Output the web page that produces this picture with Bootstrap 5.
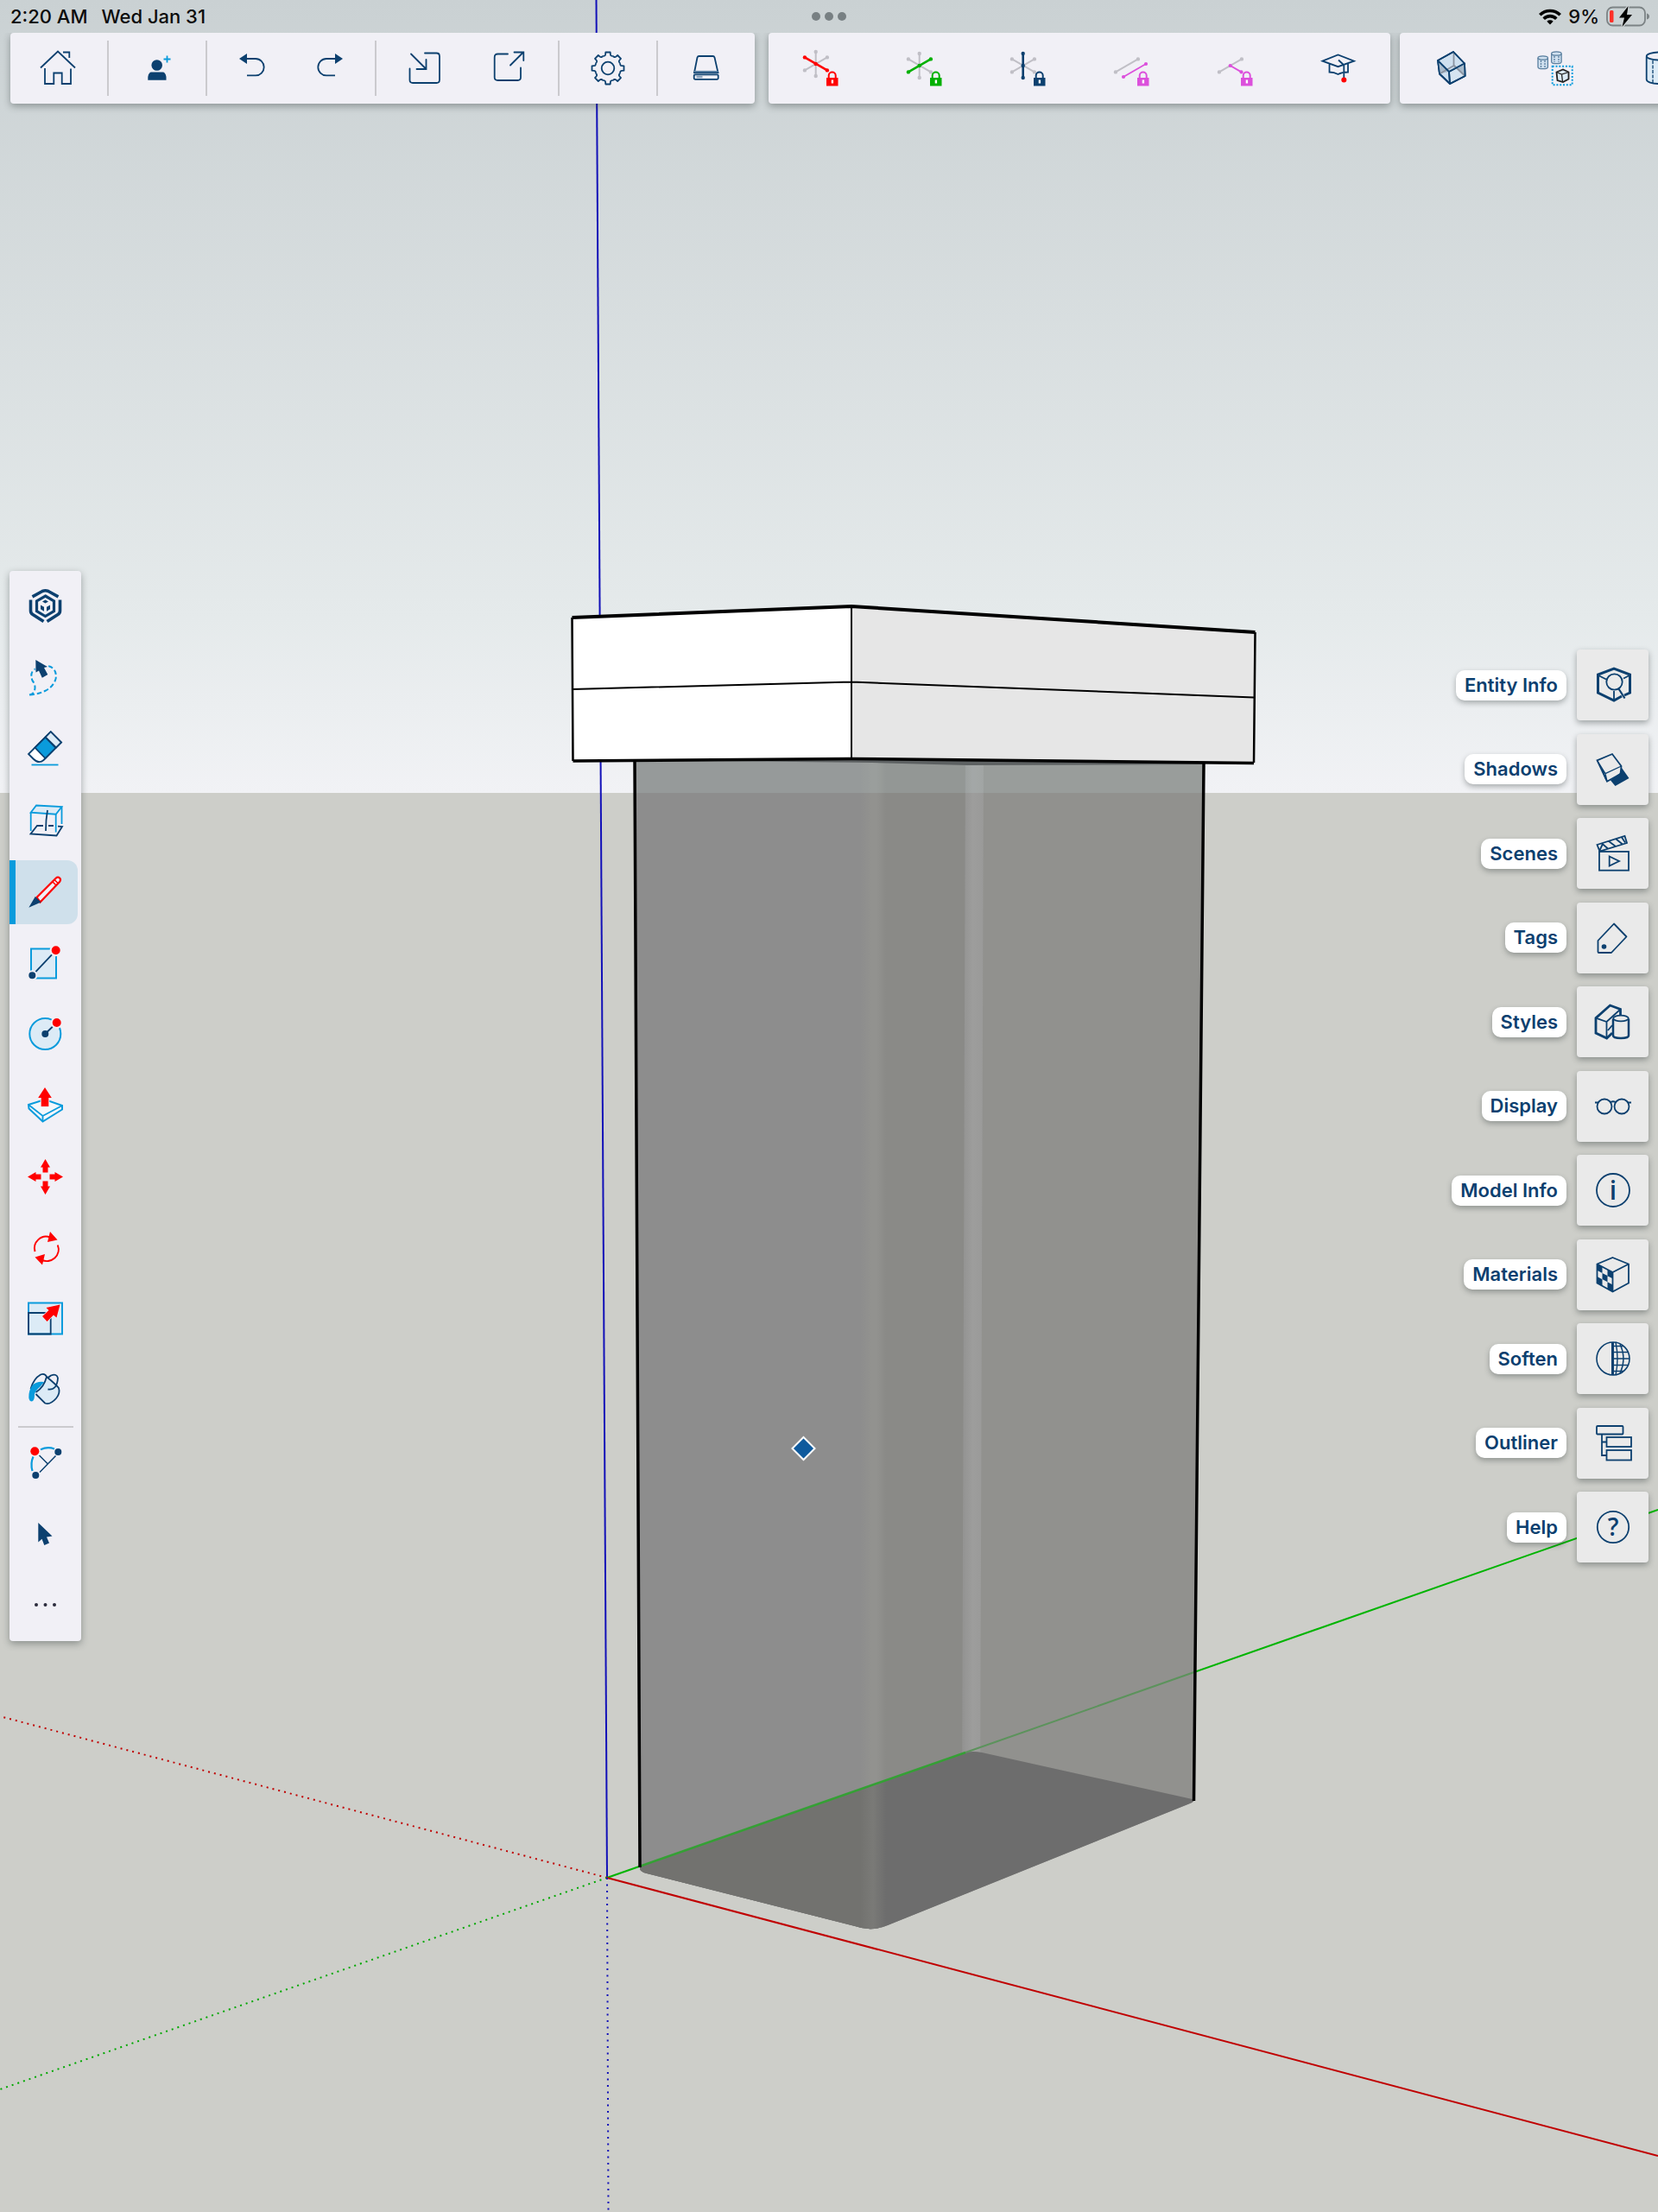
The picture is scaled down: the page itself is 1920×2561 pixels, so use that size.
<!DOCTYPE html>
<html lang="en">
<head>
<meta charset="utf-8">
<meta name="viewport" content="width=device-width, initial-scale=1">
<title>3D modeler</title>
<link href="https://cdn.jsdelivr.net/npm/bootstrap@5.3.0/dist/css/bootstrap.min.css" rel="stylesheet">
<style>
:root{--navy:#0c406f;--sky:#0a9bdc;--pale:#dcebf6;--bar:#f1f0f6;--mag:#dc50dc}
body{font-family:Inter,"Liberation Sans",sans-serif;background:#cdcec9;overflow-x:hidden}
.scene-svg{inset:0;z-index:0}
.top-zone{z-index:2}
.status-row{height:38px;padding:0 10px 0 12px;font-size:22px;line-height:38px;font-weight:500;color:#0b0b0b}
.dots{gap:5px}
.dot3{width:10px;height:10px;background:#788083}
.toolrow{overflow:hidden;padding:0 0 16px 12px}
.panel{background:var(--bar);border-radius:4px;box-shadow:0 3px 8px rgba(40,50,50,.4)}
.toolrow .panel{height:82px}
.file-bar{margin-right:16px}
.axis-bar{margin-right:11px}
.pair{padding:0 7px}
.vsep{width:2px;height:64px;background:#cbcace}
.tool{border:0;background:none;padding:0;display:flex;align-items:center;justify-content:center;flex-shrink:0;color:var(--navy)}
.w112{width:112px}.w90{width:90px}.w98{width:98px}.w120{width:120px}
.ico{width:42px;height:42px;overflow:visible;fill:none;stroke:var(--navy);stroke-width:1.8;display:block}
.rails{padding:0 11px;z-index:1}
.rail-left{width:83px;min-height:1239px}
.rail-left .tool{flex:1 1 0}
.rail-left .cur .hl{height:74px;width:100%;background:#cfe0eb;border-left:7px solid var(--sky);border-radius:0 12px 12px 0;display:flex;align-items:center;padding-left:13px;margin-right:4px}
.hsep{height:2px;width:64px;margin:-1px auto;background:#cbcace}
.rail-right{min-height:1057px}
.tile{width:83px;height:82px;background:#eaeaea;border-radius:4px;box-shadow:0 3px 7px rgba(40,50,50,.4)}
.tag-label{height:35px;line-height:35px;padding:0 10px;border-radius:10px;background:#fff;color:var(--navy);font-size:22px;font-weight:600;box-shadow:0 3px 6px rgba(40,50,50,.35);cursor:pointer}
.lk{stroke:none}
</style>
<script src="https://cdn.jsdelivr.net/npm/bootstrap@5.3.0/dist/js/bootstrap.bundle.min.js"></script>
</head>
<body class="position-relative min-vh-100">

<svg class="scene-svg position-absolute w-100 h-100" viewBox="0 0 1920 2561" preserveAspectRatio="none" aria-hidden="true">
  <defs>
    <linearGradient id="skyg" x1="0" y1="0" x2="0" y2="1"><stop offset="0" stop-color="#cad1d3"/><stop offset=".78" stop-color="#e5eaeb"/><stop offset="1" stop-color="#f1f2f5"/></linearGradient>
    <linearGradient id="st1"><stop offset="0" stop-color="#92928f" stop-opacity="0"/><stop offset=".45" stop-color="#92928f"/><stop offset=".65" stop-color="#92928f"/><stop offset="1" stop-color="#92928f" stop-opacity="0"/></linearGradient>
    <linearGradient id="st3"><stop offset="0" stop-color="#7a7a77" stop-opacity="0"/><stop offset=".5" stop-color="#7a7a77"/><stop offset="1" stop-color="#7a7a77" stop-opacity="0"/></linearGradient>
    <linearGradient id="st2"><stop offset="0" stop-color="#929291"/><stop offset=".5" stop-color="#9d9d9c"/><stop offset="1" stop-color="#9a9a99"/></linearGradient>
    <clipPath id="bodyclip"><path d="M735 880L741 2163Q741 2167 749 2169L990 2230Q1009 2237 1028 2229L1378 2088Q1383 2086 1383 2083L1394 880Z"/></clipPath>
  </defs>
  <rect width="1920" height="918" fill="url(#skyg)"/>
  <rect y="918" width="1920" height="1643" fill="#cdcec9"/>
  <g fill="none" stroke-width="2">
    <path d="M690.500 0L703 2174" stroke="#1210b8"/>
    <path d="M703 2174L1920 1748" stroke="#00b400"/>
    <path d="M703 2174L1920 2496" stroke="#c00000"/>
    <path d="M703 2174L-4 1986" stroke="#c00000" stroke-dasharray="2 5"/>
    <path d="M703 2174L0 2419" stroke="#00a800" stroke-dasharray="2 5"/>
    <path d="M703 2174L704.500 2561" stroke="#1210b8" stroke-dasharray="2 5.500"/>
  </g>
  <g clip-path="url(#bodyclip)">
    <rect x="730" y="870" width="280" height="1400" fill="#8d8d8d"/>
    <path d="M1010 870H1129L1125 2270H1010Z" fill="#8a8a87"/>
    <path d="M1129 870H1400V2270H1125Z" fill="#91918e"/>
    <path d="M1118 870H1139L1135 2100H1114Z" fill="url(#st2)"/>
    <rect x="996" y="870" width="30" height="1400" fill="url(#st1)"/>
    <rect x="730" y="870" width="670" height="48" fill="#c9dfe2" opacity=".16"/>
    <path d="M730 2165L1118 2029Q1127 2027 1137 2029L1390 2085V2300H730Z" fill="#6d6d6d"/>
    <path d="M730 2165L1010 2067V2300H730Z" fill="#72726f"/>
    <path d="M996 2072L1026 2061V2270H996Z" fill="url(#st3)"/>
    <path d="M703 2174L1118 2029" stroke="#35a035" stroke-width="2.500"/>
    <path d="M1118 2029L1400 1930" stroke="#5c935c" stroke-width="2"/>
    <path d="M735 880L1010 883L1120 886L1394 885V878H735Z" fill="#5d6162"/>
  </g>
  <path d="M735 881L741 2162M1394 883L1382.500 2085" stroke="#000" stroke-width="3.500"/>
  <path d="M662.500 715L986 702V878L663.500 881Z" fill="#fff"/>
  <path d="M986 702L1453.500 732L1452 883L986 878Z" fill="#e6e6e6"/>
  <g fill="none" stroke="#000" stroke-linejoin="round">
    <path d="M662.500 715L986 702L1453.500 732" stroke-width="4"/>
    <path d="M663.500 881L986 878.500L1452 883.500" stroke-width="3.500"/>
    <path d="M662.500 715L663.500 881M1453.500 732L1452 883" stroke-width="2.500"/>
    <path d="M663 798L986 789.500L1452 807.500M986 702V878" stroke-width="2"/>
  </g>
  <path d="M930.500 1664L943.500 1677L930.500 1690L917.500 1677Z" fill="#0f5a9d" stroke="#fff" stroke-width="2"/>
</svg>

<svg width="0" height="0" class="position-absolute" aria-hidden="true">
  <defs>
    <g id="lock"><path d="M28 32H41.500V41.500H28Z"/><path d="M30.700 33V29.500a4 4 0 0 1 8 0V33" fill="none" stroke="currentColor" stroke-width="2"/><path d="M33.700 34.500h2.400v4h-2.400z" fill="#fff"/></g>
    <g id="ln1" stroke="#c0bfc6" fill="#c0bfc6" stroke-width="2"><path d="M2.900 10.400L28.900 25.400"/><circle cx="2.900" cy="10.400" r="1.200"/><circle cx="28.900" cy="25.400" r="1.200"/></g>
    <g id="ln2" stroke="#c0bfc6" fill="#c0bfc6" stroke-width="2"><path d="M2.900 25.400L28.900 10.400"/><circle cx="2.900" cy="25.400" r="1.200"/><circle cx="28.900" cy="10.400" r="1.200"/></g>
    <g id="ln3" stroke="#c0bfc6" fill="#c0bfc6" stroke-width="2"><path d="M15.700 4V32"/><circle cx="15.700" cy="4" r="1.200"/><circle cx="15.700" cy="32" r="1.200"/></g>
    <path id="tooth" d="M-5.740-13.860L-3.700-14.500Q-3-14.800-2.900-16L-2.700-18.500H2.700L2.900-16Q3-14.800 3.700-14.500L5.740-13.860"/>
    <path id="arw" d="M0-20.500L5.500-11H3V-5H-3V-11H-5.500Z"/>
  </defs>
</svg>

<header class="top-zone position-absolute top-0 start-0 w-100">
  <div class="status-row d-flex justify-content-between align-items-center position-relative">
    <div class="d-flex gap-3"><span>2:20 AM</span><span>Wed Jan 31</span></div>
    <div class="dots position-absolute top-50 start-50 translate-middle d-flex"><i class="dot3 rounded-circle"></i><i class="dot3 rounded-circle"></i><i class="dot3 rounded-circle"></i></div>
    <div class="d-flex align-items-center gap-2">
      <svg width="26" height="19" viewBox="0 0 26 19" fill="none" stroke="#000" stroke-width="3.600"><path d="M1.300 7.300a16.500 16.500 0 0 1 23.400 0M5.700 11.700a10.300 10.300 0 0 1 14.600 0"/><path d="M9.300 14.700a5.400 5.400 0 0 1 7.400 0L13 18.500z" fill="#000" stroke="none"/></svg>
      <span>9%</span>
      <svg width="50" height="24" viewBox="0 0 50 24"><rect x="1" y="1.500" width="44" height="21" rx="6.500" fill="none" stroke="#7c8385" stroke-width="1.800"/><path d="M47 8.500q3 1 3 3.500t-3 3.500z" fill="#7c8385"/><rect x="4" y="5" width="4.500" height="14" rx="1.500" fill="#ff3028"/><path d="M25.500 0L15 13.500h6L18.500 24 30 10h-6z" fill="#000" stroke="#cbd1d3" stroke-width="2.500" paint-order="stroke"/></svg>
    </div>
  </div>

  <div class="toolrow d-flex">
    <nav class="panel file-bar d-flex align-items-center flex-shrink-0" aria-label="File">
      <button class="tool w112" aria-label="Home"><svg class="ico" viewBox="0 0 42 42"><path d="M0 20.500L20 1.500 40 20.500M26 2.500h7.300V9M5 21V39H15.300V26.500H24.700V39H35V21.500"/></svg></button>
      <span class="vsep"></span>
      <button class="tool w112" aria-label="Add person"><svg class="ico" viewBox="0 0 42 42"><circle cx="20.700" cy="17.500" r="6.300" fill="var(--navy)" stroke="none"/><path d="M10.300 34.700V31q1-5.500 4-5.500H27.500q3 0 4 5.500V34.700Z" fill="var(--navy)" stroke="none"/><path d="M32.500 6.500v8M28.500 10.500h8" stroke="var(--sky)"/></svg></button>
      <span class="vsep"></span>
      <span class="pair d-flex">
        <button class="tool w90" aria-label="Undo"><svg class="ico" viewBox="0 0 42 42"><path d="M14 10H25a9.700 9.700 0 0 1 0 19.400H15"/><path d="M6 10L15 4V16Z" fill="var(--navy)" stroke="none"/></svg></button>
        <button class="tool w90" aria-label="Redo"><svg class="ico" viewBox="0 0 42 42"><path d="M28 10H17a9.700 9.700 0 0 0 0 19.400H27"/><path d="M36 10L27 4V16Z" fill="var(--navy)" stroke="none"/></svg></button>
      </span>
      <span class="vsep"></span>
      <span class="pair d-flex">
        <button class="tool w98" aria-label="Import"><svg class="ico" viewBox="0 0 42 42" stroke-linecap="round"><path d="M21 3.500H34.500Q38 3.500 38 7V34.500Q38 38 34.500 38H7Q3.500 38 3.500 34.500V21.500M5 4.500L22.500 22M11.500 22H22.500V11"/></svg></button>
        <button class="tool w98" aria-label="Export"><svg class="ico" viewBox="0 0 42 42" stroke-linecap="round"><path d="M19 4.500H7.500Q3.700 4.500 3.700 8.500V31.500Q3.700 35 7.500 35H30.500Q34 35 34 31.500V20.500M22 17.500L37 2.500M26.500 2.500H37.300V12"/></svg></button>
      </span>
      <span class="vsep"></span>
      <button class="tool w112" aria-label="Settings"><svg class="ico" viewBox="-21 -21 42 42" stroke-linejoin="round"><circle r="7.300"/><use href="#tooth"/><use href="#tooth" transform="rotate(45)"/><use href="#tooth" transform="rotate(90)"/><use href="#tooth" transform="rotate(135)"/><use href="#tooth" transform="rotate(180)"/><use href="#tooth" transform="rotate(225)"/><use href="#tooth" transform="rotate(270)"/><use href="#tooth" transform="rotate(315)"/></svg></button>
      <span class="vsep"></span>
      <button class="tool w112" aria-label="Storage"><svg class="ico" viewBox="0 0 42 42" stroke-width="1.500"><path d="M7 26L10.500 8.500Q11 7 12.500 7H28.500Q30 7 30.500 8.500L34.500 26Z"/><path d="M7 24.800H34.500" stroke="#5d83a6"/><rect x="6.700" y="28.300" width="28" height="5.500" rx="1.200"/><path d="M9.500 31h7" stroke="#8aa3bd" stroke-width="2.500"/></svg></button>
    </nav>

    <nav class="panel axis-bar d-flex align-items-center flex-shrink-0" aria-label="Axis locks">
      <button class="tool w120" aria-label="Lock red axis"><svg class="ico" viewBox="0 0 42 42"><g transform="translate(0 -2)"><use href="#ln3"/><use href="#ln2"/><path d="M2.900 10.400L28.900 25.400" stroke="red" stroke-width="2.600"/><g fill="red" stroke="none"><circle cx="2.900" cy="10.400" r="2.200"/><circle cx="15.700" cy="18" r="2.200"/><circle cx="28.900" cy="25.400" r="2.200"/></g></g><use href="#lock" class="lk" fill="red" color="red"/></svg></button>
      <button class="tool w120" aria-label="Lock green axis"><svg class="ico" viewBox="0 0 42 42"><use href="#ln3"/><use href="#ln1"/><path d="M2.900 25.400L28.900 10.400" stroke="#00b000" stroke-width="2.600"/><g fill="#00b000" stroke="none"><circle cx="2.900" cy="25.400" r="2.200"/><circle cx="15.700" cy="18" r="2.200"/><circle cx="28.900" cy="10.400" r="2.200"/></g><use href="#lock" class="lk" fill="#00b000" color="#00b000"/></svg></button>
      <button class="tool w120" aria-label="Lock blue axis"><svg class="ico" viewBox="0 0 42 42"><use href="#ln1"/><use href="#ln2"/><path d="M15.700 4V32" stroke-width="2.600"/><g fill="#0c406f" stroke="none"><circle cx="15.700" cy="4" r="2.200"/><circle cx="15.700" cy="18" r="2.200"/><circle cx="15.700" cy="32" r="2.200"/></g><use href="#lock" class="lk" fill="#0c406f" color="#0c406f"/></svg></button>
      <button class="tool w120" aria-label="Lock parallel"><svg class="ico" viewBox="0 0 42 42"><use href="#ln2"/><path d="M12 31L38 16" stroke="var(--mag)"/><g fill="#dc50dc" stroke="none"><circle cx="12" cy="31" r="2.100"/><circle cx="38" cy="16" r="2.100"/></g><use href="#lock" class="lk" fill="#dc50dc" color="#dc50dc"/></svg></button>
      <button class="tool w120" aria-label="Lock perpendicular"><svg class="ico" viewBox="0 0 42 42"><use href="#ln2"/><path d="M15.700 18L28.500 25.400" stroke="var(--mag)" stroke-width="2"/><g fill="#dc50dc" stroke="none"><circle cx="15.700" cy="18" r="2.100"/><circle cx="28.500" cy="25.400" r="2.100"/></g><use href="#lock" class="lk" fill="#dc50dc" color="#dc50dc"/></svg></button>
      <button class="tool w120" aria-label="Instructor"><svg class="ico" viewBox="0 0 42 42"><path d="M2.500 12.700L20.500 5.500 39 12.700 20.500 19.200ZM10.500 16V25.500Q16 25.500 20.500 28Q25 25.500 32 25.500V16M21 11.500L27.300 17.500V32"/><circle cx="27.300" cy="34.500" r="3" fill="red" stroke="none"/></svg></button>
    </nav>

    <nav class="panel d-flex align-items-center flex-shrink-0" aria-label="Objects">
      <button class="tool w120" aria-label="Make solid"><svg class="ico" viewBox="0 0 42 42" stroke-linejoin="round"><path d="M23 2L5 12 7 27.500 19 39 36.500 30 36 15.500Z" fill="#cfe0ef"/><path d="M18 25L36 15.500 36.500 30 19 39Z" fill="#d5e4f1"/><path d="M24 18L36.500 30 36 15.500 18 25 23.500 20.500ZM5 12L18 25 7 27.500Z" fill="#a9bbcb" stroke="none"/><path d="M23.500 3V18L7 27.500M24 18L36 29.500" stroke="#8a93a0"/><path d="M23 2L5 12 7 27.500 19 39 36.500 30 36 15.500ZM5 12L18 25 36 15.500M18 25L19 39"/></svg></button>
      <button class="tool w120" aria-label="Make component"><svg class="ico" viewBox="0 0 42 42"><g fill="#cfe0ef" stroke="#5a7f9f" stroke-width="1.300"><path d="M1 9V19.500a5.700 2.200 0 0 0 11.400 0V9"/><ellipse cx="6.700" cy="9" rx="5.700" ry="2.200"/><path d="M4.500 12v8M9 12v8" stroke-dasharray="2 1"/><path d="M16.700 4V13.500a5.700 2.200 0 0 0 11.400 0V4"/><ellipse cx="22.400" cy="4" rx="5.700" ry="2.200"/><path d="M20 7v7M25 7v7" stroke-dasharray="2 1"/></g><rect x="17.700" y="18.700" width="23" height="21.500" stroke="var(--sky)" stroke-dasharray="2 1.800" stroke-width="2"/><path d="M22.500 25.500L30 22.500 36.500 25.500V33.500L30 37 23.500 35Z" fill="#dcebf6" stroke="#222" /><path d="M22.500 25.500L28.500 28 36.500 25.500M28.500 28L29.500 36.500" stroke="#222" stroke-width="1.300"/></svg></button>
      <button class="tool w120" aria-label="Cylinder"><svg class="ico" viewBox="0 0 42 42"><path d="M6.700 7.500V34a14.500 5 0 0 0 29 0V7.500" fill="#dcebf6"/><ellipse cx="21.200" cy="7" rx="14.500" ry="4.500" fill="#f1f0f6"/><path d="M14 12V38M28 12V38" stroke-dasharray="4 1.500" stroke-width="1.300"/></svg></button>
    </nav>
  </div>
</header>

<main class="rails position-relative min-vh-100 d-flex justify-content-between align-items-center">
  <nav class="rail-left panel d-flex flex-column" aria-label="Drawing tools">
    <button class="tool" aria-label="Search"><svg class="ico" viewBox="0 0 42 42"><path d="M5.500 9.800L17 3.500Q20.500 2 24 3.500L35.500 9.800M3.500 13.500V26Q3.500 29 6 30.500L18.500 38.500M37.500 13.500V26Q37.500 29 35 30.500L22.500 38.500" stroke-width="3.600"/><path d="M20.500 9L30.500 14.800V26.500L20.500 32.500 10.500 26.500V14.800Z" stroke-width="3.200"/><path d="M20.500 13.500l3.500 2-3.500 2-3.500-2zM15 19.500l4 2.300v5l-4-2.600zM26 19.500l-4 2.300v5l4-2.600z" fill="var(--navy)" stroke="none"/></svg></button>
    <button class="tool" aria-label="Lasso"><svg class="ico" viewBox="0 0 42 42"><path d="M2 40.500Q9 39 8.500 31Q8 27 5.500 24Q1 12 13 9Q24 5 29 9.500Q34 14 32.500 22Q30 31 20 36Q12 40 2 40.500" stroke="var(--sky)" stroke-width="2" stroke-dasharray="5.500 3"/><path d="M9.300 0L9.500 14.500 13 12.500 16.800 20.700 23.300 17 19 9 23 8Z" fill="var(--navy)" stroke="var(--bar)" stroke-width="1.500" paint-order="stroke"/></svg></button>
    <button class="tool" aria-label="Eraser"><svg class="ico" viewBox="0 0 42 42"><path d="M26.700 1.200L39 13.500 18.500 34Q13 39 6.500 32.500L1 27Z" fill="#fff"/><path d="M26.700 1.200L39 13.500 33 19.500 20.500 7.500Z" fill="var(--pale)"/><path d="M20.500 7.500L32.500 19.800 20.500 32 8.500 19.500Z" fill="var(--sky)"/><path d="M4.500 39.500H35.500" stroke="var(--sky)"/></svg></button>
    <button class="tool" aria-label="Section"><svg class="ico" viewBox="0 0 42 42"><path d="M10 3.500L39.500 5 32.700 13.700 3.700 11.700Z" fill="var(--pale)" stroke="var(--sky)"/><path d="M3.700 11.700V33M32.700 14V34.500M39.500 5V25" stroke="var(--sky)"/><path d="M18 27H11L3.500 36.500 33.500 38.500 40 28 35 27.700"/><path d="M23 9Q21 20 21 33M24 27h6" /></svg></button>
    <button class="tool cur" aria-label="Line" aria-pressed="true"><span class="hl"><svg class="ico" viewBox="0 0 42 42"><path d="M11.500 27L34 4.500Q36 2.500 38 4.500T38 9L15.500 32.500Z" stroke="red" fill="#f1f0f6" stroke-width="2.200"/><path d="M29.500 8.500L34 13M32 6.500L36.500 11" stroke="red" stroke-width="1.500"/><path d="M2.300 38.800L9.800 26 16.500 32.500Z" fill="var(--navy)" stroke="none"/></svg></span></button>
    <button class="tool" aria-label="Rectangle"><svg class="ico" viewBox="0 0 42 42"><rect x="4" y="4.500" width="29" height="34" fill="var(--pale)" stroke="var(--sky)" stroke-width="2"/><path d="M5.300 35.300L32.700 6.300"/><circle cx="32.700" cy="6.300" r="6" fill="red" stroke="var(--bar)" stroke-width="2"/><circle cx="5.300" cy="35.300" r="5" fill="var(--navy)" stroke="var(--bar)" stroke-width="2"/></svg></button>
    <button class="tool" aria-label="Circle"><svg class="ico" viewBox="0 0 42 42"><circle cx="20.300" cy="20" r="18" fill="var(--pale)" stroke="var(--sky)" stroke-width="2"/><path d="M20.300 20L33.700 7"/><circle cx="33.700" cy="7" r="6" fill="red" stroke="var(--bar)" stroke-width="2"/><circle cx="20.300" cy="20" r="4" fill="var(--navy)" stroke="none"/></svg></button>
    <button class="tool" aria-label="Push or pull"><svg class="ico" viewBox="0 0 42 42"><path d="M1 20L20 14 40 21V25.500L17.500 39.500 1.500 24.500Z" fill="#f4f7fb" stroke="var(--sky)" stroke-width="2"/><path d="M1 20L17.500 33 40 21M17.500 33V39" stroke="var(--sky)"/><path d="M20 0L27.800 12H24.300V22H15.700V12H12.200Z" fill="red" stroke="var(--bar)" stroke-width="2" paint-order="stroke"/></svg></button>
    <button class="tool" aria-label="Move"><svg class="ico" viewBox="-20.5 -20.5 42 42"><g fill="red" stroke="none"><use href="#arw"/><use href="#arw" transform="rotate(90)"/><use href="#arw" transform="rotate(180)"/><use href="#arw" transform="rotate(270)"/></g></svg></button>
    <button class="tool" aria-label="Rotate"><svg class="ico" viewBox="0 0 42 42"><path d="M8.500 24A13.500 13.500 0 0 1 26 7.500M34.800 16.500A13.500 13.500 0 0 1 16 33.500" stroke="red" stroke-width="2"/><path d="M26 1L34.500 10.500 23 13ZM8.500 30.500L20 27 17 39.500Z" fill="red" stroke="none"/></svg></button>
    <button class="tool" aria-label="Scale"><svg class="ico" viewBox="0 0 42 42"><rect x="1" y="1.500" width="39" height="36" fill="var(--pale)" stroke="var(--sky)" stroke-width="2"/><path d="M1 13H26.700V37.500H1Z"/><path d="M37.500 3.500L33.500 18.500 30 15.500 22.500 23 17 17 24.500 10 21.500 7Z" fill="red" stroke="#e9eff6" stroke-width="1.500" paint-order="stroke"/></svg></button>
    <button class="tool" aria-label="Paint"><svg class="ico" viewBox="0 0 42 42"><path d="M9 23.500L24.500 5 35 15.500Q39 22 34 28Q29 35 23 35.500Q19 35 17.500 31.500Z" fill="var(--pale)" stroke="none"/><path d="M3.500 18Q7 6 15 1.500Q20-.5 22 4Q34 14 36 17Q38 23 33 29Q26 37 20 34.500L9.500 24"/><path d="M22 4Q19 16 9.500 22M22 4Q23 6 27 2.500Q34 0 35 5.500Q34 20 23.500 18.500"/><path d="M19 10Q4 8 1.500 24Q.5 33 5 32.500Q8 32 8 25Q8 21 15 15Z" fill="var(--sky)" stroke="none"/></svg></button>
    <span class="hsep"></span>
    <button class="tool" aria-label="Arc"><svg class="ico" viewBox="0 0 42 42"><path d="M15 6.300Q23 2.500 31 5.500M6.500 14.500Q3 22 5.500 31" stroke="var(--sky)" stroke-width="2.200"/><path d="M13.500 13L23.700 23.200M32.500 13.500L14 32.500" stroke-width="1.500"/><circle cx="8.300" cy="8.200" r="5" fill="red" stroke="none"/><circle cx="35.300" cy="9" r="4" fill="var(--navy)" stroke="none"/><circle cx="9.300" cy="36" r="4" fill="var(--navy)" stroke="none"/></svg></button>
    <button class="tool" aria-label="Select"><svg class="ico" viewBox="0 0 42 42"><path d="M12.300 8V30.500L16.500 26.800 19.300 34 25 31.500 22 24.500 28.500 23.500Z" fill="var(--navy)" stroke="none"/></svg></button>
    <button class="tool" aria-label="More tools"><svg class="ico" viewBox="0 0 42 42"><g fill="#2b2b3c" stroke="none"><circle cx="10" cy="20" r="2"/><circle cx="20.500" cy="20" r="2"/><circle cx="31" cy="20" r="2"/></g></svg></button>
  </nav>

  <div class="rail-right d-flex flex-column justify-content-between align-items-end">
    <div class="d-flex align-items-center"><label class="tag-label me-2" for="b1">Entity Info</label><button id="b1" class="tool tile ms-1"><svg class="ico" viewBox="0 0 42 42"><path d="M31 34L22 39 3.500 30V9L22 2 40.500 9V30L34 33" stroke-width="3"/><path d="M5 10.500L13 14.500M39 10.500L33 13.500M22 28V38"/><circle cx="22.500" cy="17.500" r="9.200"/><path d="M27.500 25.500L34.500 36.500" stroke-width="2.200"/></svg></button></div>
    <div class="d-flex align-items-center"><label class="tag-label me-2" for="b2">Shadows</label><button id="b2" class="tool tile ms-1"><svg class="ico" viewBox="0 0 42 42"><path d="M18 33.500L23.500 40 39.500 31 31 19 29 25Z" fill="var(--navy)" stroke="none"/><path d="M2.500 10.300L20 3 30.500 17 29.500 26 14 34.700Z"/><path d="M2.500 10.300L12 25.700 30.500 17M12 25.700L14 34.500M8 20l5 13" stroke-width="1.300"/></svg></button></div>
    <div class="d-flex align-items-center"><label class="tag-label me-2" for="b3">Scenes</label><button id="b3" class="tool tile ms-1"><svg class="ico" viewBox="0 0 42 42"><rect x="5" y="19" width="34" height="21.700"/><path d="M2.500 11L34.500 1 37 9 5.500 18.700ZM8 9.500L15 15.500M16 7L24 13M24.500 4.500L32 10.500M5 18.500L9 10M31 2.500l4 6M16.700 24.500L28 30 16.700 35.500Z"/></svg></button></div>
    <div class="d-flex align-items-center"><label class="tag-label me-2" for="b4">Tags</label><button id="b4" class="tool tile ms-1"><svg class="ico" viewBox="0 0 42 42"><path d="M22 4.500L36.500 19.500 19 38H4.500Q3.500 38 3.500 37V24Z" stroke-linejoin="round"/><circle cx="10.500" cy="31" r="2.800" fill="var(--navy)" stroke="none"/></svg></button></div>
    <div class="d-flex align-items-center"><label class="tag-label me-2" for="b5">Styles</label><button id="b5" class="tool tile ms-1"><svg class="ico" viewBox="0 0 42 42"><path d="M20 34L13.700 40 1 34V16.700L17.500 2 29.500 6.500V13" stroke-width="2.800"/><path d="M1 16.700L13.500 21 29.500 6.500M13.500 21V40M15 31l5-6"/><path d="M21 17.500V37a9 3 0 0 0 18 0V17.500" fill="#eaeaea" stroke-width="2.500"/><ellipse cx="30" cy="17" rx="8.800" ry="3.300" fill="#eaeaea"/></svg></button></div>
    <div class="d-flex align-items-center"><label class="tag-label me-2" for="b6">Display</label><button id="b6" class="tool tile ms-1"><svg class="ico" viewBox="0 0 42 42"><circle cx="11" cy="21" r="8.500"/><circle cx="31" cy="21" r="8.500"/><path d="M0 16.500H4M38 16.500H42M18 16Q21 14.500 24 16"/></svg></button></div>
    <div class="d-flex align-items-center"><label class="tag-label me-2" for="b7">Model Info</label><button id="b7" class="tool tile ms-1"><svg class="ico" viewBox="0 0 42 42"><circle cx="21" cy="21" r="19"/><text x="21" y="32" text-anchor="middle" font-size="30" font-weight="600" font-family="Open Sans, sans-serif" fill="#0c406f" stroke="none">i</text></svg></button></div>
    <div class="d-flex align-items-center"><label class="tag-label me-2" for="b8">Materials</label><button id="b8" class="tool tile ms-1"><svg class="ico" viewBox="0 0 42 42"><path d="M20.500 1L39 8.500V30.500L20.500 40.500 2.500 30.500V8.500ZM2.500 8.500L20.500 18 39 8.500M20.500 18V40"/><g fill="var(--navy)" stroke="none"><path d="M2.500 8.500l6 3.200v7.200l-6-3.200zM14.500 14.900l6 3.100v7.300l-6-3.100zM8.500 18.900l6 3.200v7.200l-6-3.200zM2.500 23l6 3.200v7.300l-6-3.200zM14.500 29.300l6 3.200v8l-6-3.700z"/></g></svg></button></div>
    <div class="d-flex align-items-center"><label class="tag-label me-2" for="b9">Soften</label><button id="b9" class="tool tile ms-1"><svg class="ico" viewBox="0 0 42 42"><circle cx="21" cy="21" r="19" stroke-width="1.600"/><path d="M20.500 2V40" stroke-width="3"/><path d="M21 6.500H33M21 13.500H38.500M21 21H40M21 28.500H38.500M21 35.500H33M24 2Q28 21 24 40M29 4Q37 21 29 38" stroke-width="1.400"/></svg></button></div>
    <div class="d-flex align-items-center"><label class="tag-label me-2" for="b10">Outliner</label><button id="b10" class="tool tile ms-1"><svg class="ico" viewBox="0 0 42 42"><rect x="2" y="1" width="30.500" height="9.500" rx="1"/><rect x="13.500" y="14" width="28.500" height="11"/><rect x="13.500" y="29" width="28.500" height="11.500"/><path d="M8 10.500V35H13.500M8 19.500H13.500"/></svg></button></div>
    <div class="d-flex align-items-center"><label class="tag-label me-2" for="b11">Help</label><button id="b11" class="tool tile ms-1"><svg class="ico" viewBox="0 0 42 42"><circle cx="21" cy="21" r="18.200"/><text x="21" y="31" text-anchor="middle" font-size="28" font-weight="600" font-family="Open Sans, sans-serif" fill="#0c406f" stroke="none">?</text></svg></button></div>
  </div>
</main>
</body>
</html>
